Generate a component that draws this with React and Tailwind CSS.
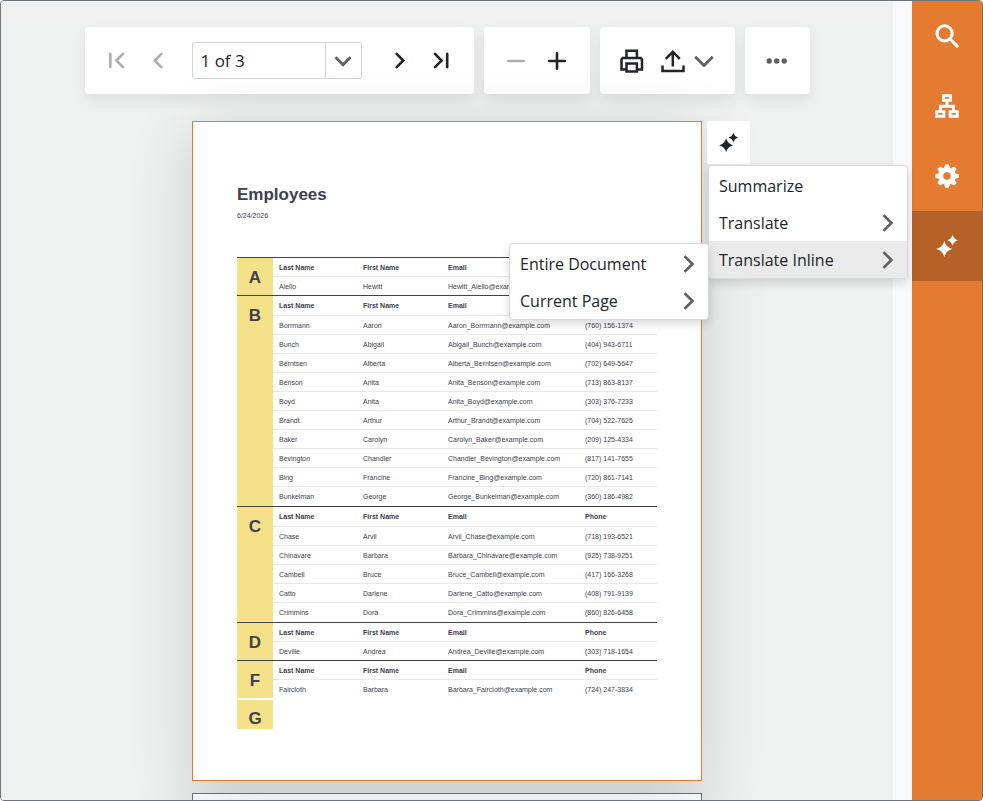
import React, { useState } from 'react';

const HEADERS = ['Last Name', 'First Name', 'Email', 'Phone'];

const GROUPS = [
    { letter: 'A', rows: [['Aiello', 'Hewitt', 'Hewitt_Aiello@example.com', '']] },
    {
        letter: 'B',
        rows: [
            ['Borrmann', 'Aaron', 'Aaron_Borrmann@example.com', '(760) 156-1374'],
            ['Bunch', 'Abigail', 'Abigail_Bunch@example.com', '(404) 943-6711'],
            ['Berntsen', 'Alberta', 'Alberta_Berntsen@example.com', '(702) 649-5647'],
            ['Benson', 'Anita', 'Anita_Benson@example.com', '(713) 863-8137'],
            ['Boyd', 'Anita', 'Anita_Boyd@example.com', '(303) 376-7233'],
            ['Brandt', 'Arthur', 'Arthur_Brandt@example.com', '(704) 522-7625'],
            ['Baker', 'Carolyn', 'Carolyn_Baker@example.com', '(209) 125-4334'],
            ['Bevington', 'Chandler', 'Chandler_Bevington@example.com', '(817) 141-7655'],
            ['Bing', 'Francine', 'Francine_Bing@example.com', '(720) 861-7141'],
            ['Bunkelman', 'George', 'George_Bunkelman@example.com', '(360) 186-4982'],
        ],
    },
    {
        letter: 'C',
        rows: [
            ['Chase', 'Arvil', 'Arvil_Chase@example.com', '(718) 193-6521'],
            ['Chinavare', 'Barbara', 'Barbara_Chinavare@example.com', '(925) 738-9251'],
            ['Cambell', 'Bruce', 'Bruce_Cambell@example.com', '(417) 166-3268'],
            ['Catto', 'Darlene', 'Darlene_Catto@example.com', '(408) 791-9139'],
            ['Crimmins', 'Dora', 'Dora_Crimmins@example.com', '(860) 826-6458'],
        ],
    },
    { letter: 'D', rows: [['Deville', 'Andrea', 'Andrea_Deville@example.com', '(303) 718-1654']] },
    { letter: 'F', rows: [['Faircloth', 'Barbara', 'Barbara_Faircloth@example.com', '(724) 247-3834']] },
];

const Stroke = ({ d, width = 2.6, size = 24, cap = 'round' }) => (
    <svg width={size} height={size} viewBox="0 0 24 24" fill="none" stroke="currentColor" strokeWidth={width} strokeLinecap={cap} aria-hidden="true">
        <path d={d} />
    </svg>
);

const Sparkle = ({ size = 24 }) => (
    <svg width={size} height={size} viewBox="0 0 24 24" fill="currentColor" aria-hidden="true">
        <path d="M9.3 7Q11 13.3 17.3 15Q11 16.7 9.3 23Q7.6 16.7 1.3 15Q7.6 13.3 9.3 7Z" />
        <path d="M17.6 1Q18.9 4.9 22.8 6.2Q18.9 7.5 17.6 11.4Q16.3 7.5 12.4 6.2Q16.3 4.9 17.6 1Z" />
    </svg>
);

const Gear = () => (
    <svg width="24" height="24" viewBox="0 0 24 24" fill="currentColor" aria-hidden="true">
        <circle cx="12" cy="12" r="6.2" fill="none" stroke="currentColor" strokeWidth="4.8" />
        {[0, 45, 90, 135, 180, 225, 270, 315].map((angle) => (
            <path key={angle} d="M8.9 4.6L10.3 0.2H13.7L15.1 4.6Z" transform={`rotate(${angle} 12 12)`} />
        ))}
    </svg>
);

const SIDE_TABS = [
    { id: 'search', label: 'Search', icon: <Stroke width={3.1} d="M17.2 9.4a7.6 7.6 0 1 1-15.2 0a7.6 7.6 0 1 1 15.2 0M15 15L22.2 22.2" /> },
    { id: 'map', label: 'Document Map', icon: <Stroke width={2.9} cap="butt" d="M8.4 1.6h7.2v4.6H8.4zM1.7 17.6h7.2v4.6H1.7zM15.1 17.6h7.2v4.6h-7.2zM12 6.2v5.8M5.5 17.6V12.2h13v5.4" /> },
    { id: 'params', label: 'Export Options', icon: <Gear /> },
    { id: 'ai', label: 'AI Operations', icon: <Sparkle /> },
];

const ToolButton = ({ label, disabled, children }) => (
    <button type="button" aria-label={label} disabled={disabled} className="flex h-10 w-[41px] items-center justify-center disabled:text-[#adadad]">
        {children}
    </button>
);

const Panel = ({ children }) => (
    <div className="flex h-[67px] items-center rounded bg-white px-3 shadow-[0_6px_14px_rgba(0,0,0,0.08)]">{children}</div>
);

const MenuItem = ({ label, hasSub, active }) => (
    <li role="none" className={active ? 'bg-[#eaeaea]' : ''}>
        <button type="button" role="menuitem" className="flex h-[37px] w-full items-center justify-between px-[10px] text-left">
            {label}
            {hasSub && (
                <span className="text-[#5f6064]">
                    <Stroke size={18} width={3.6} cap="butt" d="M6 1.5L16.5 12L6 22.5" />
                </span>
            )}
        </button>
    </li>
);

const Toolbar = () => {
    const [page, setPage] = useState('1 of 3');

    return (
        <div role="toolbar" className="flex justify-center gap-[10px]">
            <Panel>
                <ToolButton label="First page" disabled>
                    <Stroke d="M5.3 4.9v13.2M18 4.9L11.4 11.5L18 18.1" />
                </ToolButton>
                <ToolButton label="Previous page" disabled>
                    <Stroke d="M15.3 4.9L8.7 11.5L15.3 18.1" />
                </ToolButton>
                <div className="ml-[13px] mr-[18px] flex h-[37px] w-[170px] rounded-xs border border-[#ced4da]">
                    <input aria-label="Page number" value={page} onChange={(e) => setPage(e.target.value)} className="w-full min-w-0 flex-1 px-2 outline-none" />
                    <button type="button" aria-label="Choose page" className="flex w-9 items-center justify-center border-l border-[#ced4da] text-[#5f6064]">
                        <Stroke size={20} width={3.4} cap="butt" d="M3 7.5L12 16.5L21 7.5" />
                    </button>
                </div>
                <ToolButton label="Next page">
                    <Stroke d="M8.7 4.9L15.3 11.5L8.7 18.1" />
                </ToolButton>
                <ToolButton label="Last page">
                    <Stroke d="M6 4.9L12.6 11.5L6 18.1M18.2 4.9v13.2" />
                </ToolButton>
            </Panel>
            <Panel>
                <ToolButton label="Zoom out" disabled>
                    <Stroke d="M4.2 12h15.6" />
                </ToolButton>
                <ToolButton label="Zoom in">
                    <Stroke d="M4.2 12h15.6M12 4.2v15.6" />
                </ToolButton>
            </Panel>
            <Panel>
                <ToolButton label="Print">
                    <Stroke width={2.5} cap="butt" d="M6.5 8.8V1.7h10.4v7.1M6.5 20.6H1.5V10.5L2.7 9h18.1l1.2 1.5v10.1H17M6.5 14.5h10.4v8H6.5z" />
                </ToolButton>
                <ToolButton label="Export">
                    <Stroke width={2.5} cap="butt" d="M11.8 17.5V3M4.8 9.8L11.8 2.8L18.8 9.8M1.5 16.5v5.5h21v-5.5" />
                </ToolButton>
                <button type="button" aria-label="Export format" className="mr-[9px] flex h-10 w-5 items-center justify-center text-[#5f6064]">
                    <Stroke size={20} width={3.4} cap="butt" d="M1.5 7L12 17.5L22.5 7" />
                </button>
            </Panel>
            <Panel>
                <ToolButton label="More">
                    <svg width="24" height="24" viewBox="0 0 24 24" fill="#5f6064" aria-hidden="true">
                        <circle cx="4.2" cy="12" r="2.7" />
                        <circle cx="11.7" cy="12" r="2.7" />
                        <circle cx="19.2" cy="12" r="2.7" />
                    </svg>
                </ToolButton>
            </Panel>
        </div>
    );
};

const EmployeeTable = () => (
    <table className="w-full table-fixed border-collapse text-left text-[7px] leading-[9px]">
        <colgroup>
            <col className="w-9" />
            <col className="w-[84px]" />
            <col className="w-[85px]" />
            <col className="w-[137px]" />
            <col />
        </colgroup>
        {GROUPS.map(({ letter, rows }) => (
            <tbody key={letter} className="border-t border-[#404050]">
                <tr className={rows.length > 1 ? 'h-5' : 'h-[19px]'}>
                    <th rowSpan={rows.length + 1} scope="rowgroup" className="bg-[#f6e18b] pt-[10px] text-center align-top text-[17px] leading-5">
                        {letter}
                    </th>
                    {HEADERS.map((h) => (
                        <th key={h} scope="col" className="border-b border-[#e8e8e8] pl-[6px]">{h}</th>
                    ))}
                </tr>
                {rows.map((row, i) => {
                    const last = i === rows.length - 1;
                    return (
                        <tr key={row[2]} className={last && rows.length > 1 ? 'h-5' : 'h-[19px]'}>
                            {row.map((cell) => (
                                <td key={cell} className={last ? 'pl-[6px]' : 'border-b border-[#e8e8e8] pl-[6px]'}>{cell}</td>
                            ))}
                        </tr>
                    );
                })}
            </tbody>
        ))}
        <tbody>
            <tr>
                <th scope="rowgroup" className="border-t-2 border-white bg-[#f6e18b] pb-0 pt-[9px] text-center text-[17px] leading-5">G</th>
                <td colSpan={4} />
            </tr>
        </tbody>
    </table>
);

export default function App() {
    const [tab, setTab] = useState('ai');

    return (
        <div className="flex h-screen overflow-hidden rounded border border-[#6c757d] bg-[#f8f9fb] font-['Open_Sans','Noto_Sans',sans-serif] text-[17px] text-[#212529]">
            <main className="relative z-10 mr-[19px] min-w-0 flex-1 bg-[#eff1f0] pt-[26px]">
                <Toolbar />
                <div className="mt-[27px] flex flex-col items-center gap-3">
                    <article className="relative h-[660px] w-[510px] border border-[#e57a31] bg-white px-11 pt-[63px] font-['Liberation_Sans',sans-serif] text-[#404050] shadow-[0_12px_60px_rgba(0,0,0,0.15)]">
                        <h1 className="text-[17px] font-bold leading-5">Employees</h1>
                        <p className="mb-9 mt-[6px] text-[7px] leading-[10px]">6/24/2026</p>
                        <EmployeeTable />

                        <div className="absolute -top-px left-full z-10 ml-[6px] font-['Open_Sans','Noto_Sans',sans-serif] text-base text-[#212529]">
                            <button type="button" aria-label="AI operations" className="flex h-[43px] w-[43px] items-center justify-center rounded-xs bg-white">
                                <Sparkle size={21} />
                            </button>
                            <ul role="menu" className="absolute left-px top-full mt-px w-[200px] rounded border border-[#d5dae0] bg-white pt-px shadow-[0_4px_10px_rgba(0,0,0,0.15)]">
                                <MenuItem label="Summarize" />
                                <MenuItem label="Translate" hasSub />
                                <MenuItem label="Translate Inline" hasSub active />
                            </ul>
                            <ul role="menu" className="absolute right-full top-[122px] -mr-[2px] w-[200px] rounded border border-[#d5dae0] bg-white pt-px shadow-[0_4px_10px_rgba(0,0,0,0.15)]">
                                <MenuItem label="Entire Document" hasSub />
                                <MenuItem label="Current Page" hasSub />
                            </ul>
                        </div>
                    </article>
                    <article aria-label="Page 2" className="h-[660px] w-[510px] border border-[#6c757d] bg-white shadow-[0_12px_60px_rgba(0,0,0,0.15)]" />
                </div>
            </main>
            <nav className="flex w-[70px] shrink-0 flex-col bg-[#e57a31] text-white">
                {SIDE_TABS.map((t) => (
                    <button
                        key={t.id}
                        type="button"
                        aria-label={t.label}
                        aria-pressed={tab === t.id}
                        onClick={() => setTab(t.id)}
                        className={`flex h-[70px] items-center justify-center ${tab === t.id ? 'bg-[#b66128]' : ''}`}
                    >
                        {t.icon}
                    </button>
                ))}
            </nav>
        </div>
    );
}
